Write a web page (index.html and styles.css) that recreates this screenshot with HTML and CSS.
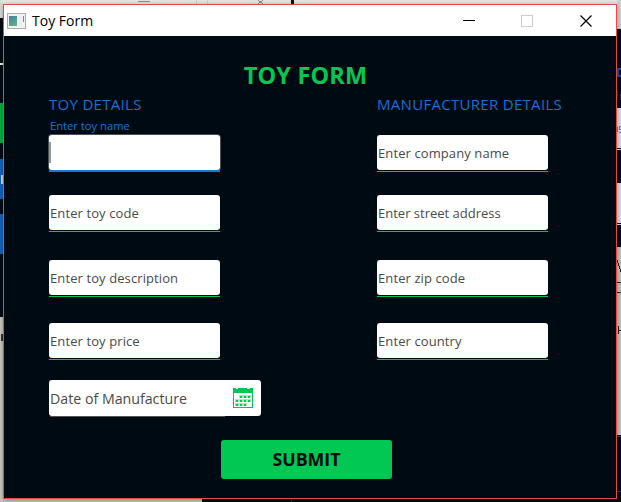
FILE: index.html
```html
<!DOCTYPE html>
<html lang="en">
<head>
<meta charset="utf-8">
<title>Toy Form</title>
<link rel="stylesheet" href="styles.css">
</head>
<body>
<svg class="desktop" width="621" height="502" viewBox="0 0 621 502" shape-rendering="crispEdges" aria-hidden="true">
  <rect width="621" height="502" fill="#000a12"/>
  <rect width="621" height="5" fill="#e6e6e6"/>
  <path d="M138 1.500h12M258 0l5 4M263 0l-5 4" stroke="#888"/>
  <path d="M196.500 0v4M207.500 0v4" stroke="#ccc"/>
  <rect x="291" width="3" height="4" fill="#111"/>
  <rect width="3" height="18" fill="#dcdcdc"/>
  <rect x="617" width="4" height="29" fill="#d0d0d0"/>
  <rect y="63" width="3" height="2" fill="#eee"/>
  <rect y="103" width="3" height="40" fill="#00b248"/>
  <rect y="159" width="3" height="40" fill="#1565c0"/>
  <rect x="1" y="175" width="2" height="9" fill="#ddd"/>
  <rect y="214" width="3" height="40" fill="#1565c0"/>
  <rect y="317" width="3" height="185" fill="#cdc9c1"/>
  <rect x="1" y="334" width="2" height="7" fill="#333"/>
  <rect y="499" width="202" height="3" fill="#cbc7bd"/>
  <path d="M291.500 499v3" stroke="#333a40"/>
  <path d="M621 69h-3v7h3" fill="none" stroke="#0d57a8" stroke-width="2"/>
  <path d="M617.500 91v9M620 94v6" stroke="#333"/>
  <rect x="617" y="108" width="4" height="40" fill="#dcdcdc"/>
  <path d="M617 149.500h4M617 224.500h4" stroke="#ddd"/>
  <rect x="617" y="183" width="4" height="40" fill="#dcdcdc"/>
  <path d="M621 126.500h-2v3h2v3h-2M617.500 127v5" fill="none" stroke="#6980a0"/>
  <rect x="617" y="247" width="4" height="188" fill="#c5c1b5"/>
  <path d="M617 260l4 12M621 282h-4M617 292h4M618 326v8M619 330h2" fill="none" stroke="#222"/>
  <path d="M617 436.500h4M617 491.500h4" stroke="#333c42"/>
</svg>
<main class="window">
  <header class="titlebar">
    <svg class="app-icon" width="19" height="16" viewBox="0 0 19 16" shape-rendering="crispEdges" aria-hidden="true">
      <defs><linearGradient id="pane" x2=".5" y2="1"><stop stop-color="#477fa9"/><stop offset="1" stop-color="#5eae82"/></linearGradient></defs>
      <rect x=".5" y=".5" width="18" height="15" fill="#f2f2f2" stroke="#a8adb5"/>
      <rect x="2" y="3" width="8" height="10" fill="url(#pane)"/>
      <rect x="11" y="3" width="5" height="10" fill="#eceeef"/>
      <rect x="16" y="3" width="1" height="6" fill="#5b9a93"/>
    </svg>
    <span class="window-title">Toy Form</span>
    <svg class="controls" width="130" height="14" viewBox="0 0 130 14" aria-hidden="true" fill="none">
      <path d="M0 6.500h12" stroke="#000"/>
      <rect x="58.500" y="1.500" width="11" height="11" stroke="#ccc"/>
      <path d="M117.500 1.500l11 11M128.500 1.500l-11 11" stroke="#000" stroke-width="1.200"/>
    </svg>
  </header>
  <form class="form">
    <h1 class="heading">TOY FORM</h1>
    <div class="columns">
      <section class="column">
        <h2 class="section-title">TOY DETAILS</h2>
        <span class="float-label">Enter toy name</span>
        <div class="field active"><i class="caret"></i></div>
        <div class="field row-2">Enter toy code</div>
        <div class="field row-3">Enter toy description</div>
        <div class="field row-4">Enter toy price</div>
        <div class="date-field"><span class="date-text">Date of Manufacture</span>
          <svg width="20" height="20" viewBox="0 0 20 20" shape-rendering="crispEdges" aria-hidden="true">
            <path fill="#00c853" fill-rule="evenodd" d="M0 0h3v1h2V0h9v1h3V0h3v20H0zM1 5v14h18V5z"/>
            <path fill="#a5ebc1" d="M6 7h12v3H6zM2 11h16v3H2zM2 15h12v3H2z"/>
            <path fill="#00c853" d="M7 8h2v2H7zM11 8h2v2h-2zM15 8h2v2h-2zM3 12h2v2H3zM7 12h2v2H7zM11 12h2v2h-2zM15 12h2v2h-2zM3 16h2v2H3zM7 16h2v2H7zM11 16h2v2h-2z"/>
          </svg>
        </div>
      </section>
      <section class="column">
        <h2 class="section-title">MANUFACTURER DETAILS</h2>
        <span class="float-label"></span>
        <div class="field">Enter company name</div>
        <div class="field row-2 street">Enter street address</div>
        <div class="field row-3">Enter zip code</div>
        <div class="field row-4">Enter country</div>
      </section>
    </div>
    <button class="submit" type="button">SUBMIT</button>
  </form>
</main>
</body>
</html>
```
FILE: styles.css
```css
* { box-sizing: border-box; }
body {
  margin: 0;
  width: 621px;
  height: 502px;
  overflow: hidden;
  background: #000a12;
  font-family: "Open Sans", "Noto Sans", sans-serif;
}
.desktop { position: absolute; left: 0; top: 0; }
.window {
  position: relative;
  width: 614px;
  height: 495px;
  margin: 4px 0 0 3px;
  border: 1px solid #e34a4f;
  background: #000a12;
  box-shadow: 0 1px 5px rgba(0, 0, 0, .35);
}
.titlebar {
  display: flex;
  align-items: center;
  height: 31px;
  padding: 0 23px 0 3px;
  background: #fff;
}
.window-title {
  margin-left: 6px;
  font-size: 14px;
  line-height: 20px;
  color: #000;
  white-space: nowrap;
}
.controls { margin-left: auto; }
.form { display: flex; flex-direction: column; height: 462px; }
.heading {
  height: 30px;
  margin: 24px 0 0;
  padding-right: 9px;
  font-size: 23.500px;
  line-height: 30px;
  letter-spacing: .15px;
  text-align: center;
  color: #00c853;
}
.columns {
  display: grid;
  grid-template-columns: 212px 200px;
  column-gap: 116px;
  padding-left: 45px;
}
.column { display: flex; flex-direction: column; align-items: flex-start; padding-top: 4px; }
.section-title {
  margin: 0;
  height: 23px;
  font-size: 15px;
  font-weight: 400;
  line-height: 21px;
  letter-spacing: .3px;
  color: #1670d8;
  white-space: nowrap;
}
.float-label {
  height: 18px;
  padding-left: 1px;
  font-size: 11.200px;
  line-height: 18px;
  color: #1976d2;
  white-space: nowrap;
}
.field {
  position: relative;
  display: flex;
  align-items: center;
  width: 171px;
  height: 35px;
  padding-left: 1px;
  border-radius: 3px;
  background: #fff;
  font-size: 13px;
  letter-spacing: .1px;
  color: #4a4a4a;
  white-space: nowrap;
}
.field::after {
  content: "";
  position: absolute;
  left: 0;
  right: 0;
  top: 36px;
  height: 1px;
  background: #00c853;
}
.field.active { padding-left: 0; box-shadow: 0 0 0 1px #4b5054; }
.field.active::after { top: 35px; height: 2px; background: #1976d2; }
.field.street { letter-spacing: 0; }
.caret { width: 2px; height: 21px; background: #999; }
.row-2 { margin-top: 25px; }
.row-3 { margin-top: 30px; }
.row-4 { margin-top: 28px; }
.date-field {
  position: relative;
  display: flex;
  align-items: center;
  justify-content: space-between;
  width: 212px;
  height: 36px;
  margin-top: 22px;
  padding: 0 8px 0 1px;
  border-radius: 3px;
  background: #fff;
  font-size: 14.200px;
  color: #4a4a4a;
  white-space: nowrap;
}
.date-field::after {
  content: "";
  position: absolute;
  left: 1px;
  top: 36px;
  width: 175px;
  height: 1px;
  background: #555;
}
.submit {
  width: 171px;
  height: 39px;
  margin: 24px 0 0 217px;
  padding: 0;
  border: 0;
  border-radius: 3px;
  background: #00c853;
  font: 700 17.800px/39px "Open Sans", "Noto Sans", sans-serif;
  color: #000a12;
}
```
